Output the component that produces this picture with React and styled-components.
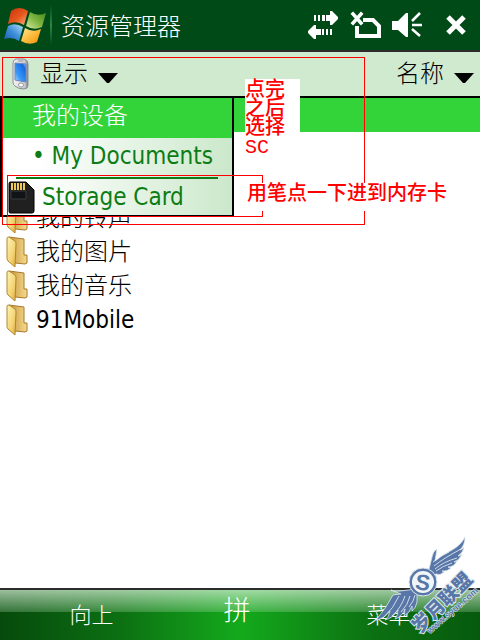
import { useState } from 'react';
import styled, { createGlobalStyle } from 'styled-components';

const files = ['我的铃声', '我的图片', '我的音乐', '91Mobile'];

const WindowsLogo = () => (
  <svg width="48" height="50" viewBox="0 0 48 50" aria-hidden="true">
    <defs>
      <linearGradient id="red" x1="0" y1="0" x2="1" y2="1">
        <stop offset="0" stopColor="#c4330c" />
        <stop offset="0.55" stopColor="#e8571c" />
        <stop offset="1" stopColor="#fbb48a" />
      </linearGradient>
      <linearGradient id="green" x1="1" y1="0" x2="0" y2="1">
        <stop offset="0" stopColor="#3f8a1e" />
        <stop offset="0.5" stopColor="#7fb540" />
        <stop offset="1" stopColor="#d4e8a0" />
      </linearGradient>
      <linearGradient id="blue" x1="0" y1="1" x2="1" y2="0">
        <stop offset="0" stopColor="#1859b4" />
        <stop offset="0.5" stopColor="#3f8fd8" />
        <stop offset="1" stopColor="#b4e0f6" />
      </linearGradient>
      <linearGradient id="yellow" x1="1" y1="1" x2="0" y2="0">
        <stop offset="0" stopColor="#f08c10" />
        <stop offset="0.5" stopColor="#fcbc3c" />
        <stop offset="1" stopColor="#fdeaa0" />
      </linearGradient>
    </defs>
    <path d="M11 11 Q19 5 28 11 L24 25 Q16 20 8 24 Z" fill="url(#red)" />
    <path d="M30 12 Q38 17 46 13 L42 27 Q34 31 26 26 Z" fill="url(#green)" />
    <path d="M8 26 Q15 22 23 27 L19 41 Q12 36 4 39 Z" fill="url(#blue)" />
    <path d="M25 28 Q33 33 41 29 L37 42 Q29 46 21 41 Z" fill="url(#yellow)" />
  </svg>
);

const SyncIcon = () => (
  <svg width="32" height="28" viewBox="0 0 32 28" fill="#fff" aria-hidden="true">
    <path d="M7 4h2v6H7zM11 4h2v6h-2zM15 4h3v6h-3zM19 4h4V0h2l6 6v2l-6 6h-2v-4h-4z" />
    <path d="M25 18h-2v6h2zM21 18h-2v6h2zM17 18h-2v6h2zM14 18H9v-4H7l-6 6v2l6 6h2v-4h5z" />
  </svg>
);

const NoCardIcon = () => (
  <svg width="32" height="28" viewBox="0 0 32 28" fill="none" stroke="#fff" aria-hidden="true">
    <path d="M4 3l8 9M12 3l-8 9" strokeWidth="3.500" strokeLinecap="square" />
    <path d="M14 9h10l6 6v10H8V15" strokeWidth="4" />
  </svg>
);

const SpeakerIcon = () => (
  <svg width="32" height="28" viewBox="0 0 32 28" aria-hidden="true">
    <path d="M1 10h6l8-8h2v24h-2l-8-7H1z" fill="#fff" />
    <path d="M21 10l8-8M21 14h10M21 18l8 7" stroke="#fff" strokeWidth="2.500" fill="none" />
  </svg>
);

const CloseIcon = () => (
  <svg width="20" height="20" viewBox="0 0 20 20" aria-hidden="true">
    <path d="M2 2l16 16M18 2L2 18" stroke="#fff" strokeWidth="5" />
  </svg>
);

const PhoneIcon = () => (
  <svg width="18" height="32" viewBox="0 0 18 32" aria-hidden="true">
    <defs>
      <linearGradient id="body" x1="0" x2="1">
        <stop offset="0" stopColor="#f4f4f8" />
        <stop offset="0.8" stopColor="#c8c8d0" />
        <stop offset="1" stopColor="#77777f" />
      </linearGradient>
      <linearGradient id="screen" x1="0" y1="1" x2="1" y2="0">
        <stop offset="0" stopColor="#b8e0ff" />
        <stop offset="0.3" stopColor="#3c9cf8" />
        <stop offset="0.8" stopColor="#1468e0" />
        <stop offset="1" stopColor="#a8d0ff" />
      </linearGradient>
    </defs>
    <path
      d="M4 1h8q4 1 4 5v21q0 4-4 4-6 0-9-3-2-1-2-4V5q0-3 3-4z"
      fill="url(#body)"
      stroke="#8c8c94"
    />
    <path d="M3 5l11 1v18L3 22z" fill="url(#screen)" stroke="#6a84b8" />
    <path d="M6 3h5" stroke="#999" />
    <ellipse cx="9" cy="27" rx="2.500" ry="2" fill="#fff" stroke="#999" />
  </svg>
);

const CaretIcon = () => (
  <svg width="20" height="10" viewBox="0 0 20 10" aria-hidden="true">
    <path d="M0 0h20l-9 10H9z" fill="#000" />
  </svg>
);

const CardIcon = () => (
  <svg width="27" height="33" viewBox="0 0 27 33" aria-hidden="true">
    <path d="M2 1h16l8 8v21q0 2-2 2H2q-1 0-1-2V3q0-2 1-2z" fill="#202020" stroke="#000" />
    <path d="M3 10h15v8H3z" fill="#101418" stroke="#3a3a3a" />
    <path d="M4 2v7M7 2v7M10 2v7M13 2v7M16 2v7" stroke="#f0c858" strokeWidth="2" />
  </svg>
);

const FolderIcon = () => (
  <svg width="22" height="34" viewBox="0 0 22 34" aria-hidden="true">
    <defs>
      <linearGradient id="flap" x1="0" y1="0" x2="1" y2="1">
        <stop offset="0" stopColor="#fdf4b8" />
        <stop offset="0.6" stopColor="#f4d474" />
        <stop offset="1" stopColor="#dca63c" />
      </linearGradient>
      <linearGradient id="back" x1="0" x2="1">
        <stop offset="0" stopColor="#c8943c" />
        <stop offset="1" stopColor="#f4dc8c" />
      </linearGradient>
    </defs>
    <path d="M3 3l15 2v16h3v8l-2 1-10-1z" fill="url(#back)" stroke="#a8782c" />
    <path d="M1 4q0-1 2-1l6 4q1 1 1 3l-1 23-7-6q-1-1-1-3z" fill="url(#flap)" stroke="#b08830" />
  </svg>
);

const Watermark = () => (
  <svg width="110" height="110" viewBox="370 530 110 110" role="img" aria-label="岁月联盟">
    <g fill="#5877a8" stroke="#dbe7ec" strokeWidth="0.800">
      <path d="M428 573l4-16q1-6 5-8l-2 12q8-7 17-11 9-5 13-13 0 8-5 13 3-1 4-3-1 6-6 9 2 0 4-2-3 7-8 8l3-1q-3 6-9 6l3 1q-4 4-9 3l2 1q-4 4-8 2-3 1-5 4z" />
      <path
        d="M434 566q10-8 27-17M435 569q8-7 22-11M436 571q7-5 16-8M433 562q7-6 16-10"
        fill="none"
        stroke="#eef3f6"
      />
      <path d="M417 595l-1-6-16 2q-6 1-9-1l10 4-8 1q-6 12-17 25 8-1 14-9-1 6-5 9 8-2 13-10 0 5-3 9 7-2 10-10l-1 7q6-3 8-10v5q4-3 5-9z" />
      <path
        d="M399 596q-5 12-16 22M405 596q-4 12-13 20M410 596q-2 9-9 16M415 595q-1 6-6 12"
        fill="none"
        stroke="#eef3f6"
      />
    </g>
    <circle cx="423" cy="582" r="14" fill="#5877a8" stroke="#dbe7ec" />
    <circle cx="423" cy="582" r="11" fill="#f0f5f8" />
    <SealText x="423" y="590" textAnchor="middle" transform="rotate(8 423 582)">S</SealText>
    <BrandText x="420" y="634" transform="rotate(-45 420 634)">岁月联盟</BrandText>
    <UrlText x="430" y="634" transform="rotate(-41 430 634)">www.syue.com</UrlText>
  </svg>
);

const App = () => {
  const [menuOpen, setMenuOpen] = useState(true);

  return (
    <Screen>
      <GlobalStyle />
      <TitleBar>
        <WindowsLogo />
        <Divider />
        <Title>资源管理器</Title>
        <Status>
          <SyncIcon />
          <NoCardIcon />
          <SpeakerIcon />
        </Status>
        <CloseButton type="button" aria-label="关闭">
          <CloseIcon />
        </CloseButton>
      </TitleBar>

      <Toolbar>
        <ToolButton type="button" aria-expanded={menuOpen} onClick={() => setMenuOpen(!menuOpen)}>
          <PhoneIcon />
          <span>显示</span>
          <CaretIcon />
        </ToolButton>
        <ToolButton type="button">
          <span>名称</span>
          <CaretIcon />
        </ToolButton>
      </Toolbar>

      <Content>
        <FileList>
          <FileRow $selected />
          <FileRow />
          <FileRow />
          {files.map((name) => (
            <FileRow key={name}>
              <FolderIcon />
              <FileName>{name}</FileName>
            </FileRow>
          ))}
        </FileList>
        {menuOpen && (
          <Menu>
            <MenuItem type="button" $active>我的设备</MenuItem>
            <MenuItem type="button">• My Documents</MenuItem>
            <Separator />
            <CardItem type="button">
              <CardIcon />
              <span>Storage Card</span>
            </CardItem>
          </Menu>
        )}
      </Content>

      <Footer>
        <SoftKey type="button">向上</SoftKey>
        <InputKey type="button">拼</InputKey>
        <SoftKey type="button">菜单</SoftKey>
      </Footer>

      {/* Tutorial marks drawn over the screen */}
      <OuterFrame />
      <InnerFrame />
      <StepNote>点完之后选择SC</StepNote>
      <CardNote>用笔点一下进到内存卡</CardNote>
      <Stamp>
        <Watermark />
      </Stamp>
    </Screen>
  );
};

// Styled Components
const GlobalStyle = createGlobalStyle`
  * {
    box-sizing: border-box;
  }

  body {
    margin: 0;
    background: #fff;
  }

  svg {
    display: block;
    flex: none;
  }

  button {
    margin: 0;
    padding: 0;
    border: 0;
    background: none;
    color: inherit;
    font: inherit;
    cursor: pointer;
  }
`;

const Screen = styled.div`
  position: relative;
  display: flex;
  flex-direction: column;
  min-height: 100vh;
  overflow: hidden;
  color: #000;
  font-family: 'DejaVu Sans Condensed', 'Noto Sans CJK SC', sans-serif;
  font-size: 24px;
  font-weight: 300;
  line-height: 34px;
`;

const TitleBar = styled.header`
  display: flex;
  align-items: center;
  height: 52px;
  padding-right: 14px;
  border-bottom: 2px solid #2c2c2c;
  background: #004a18;
  color: #fff;
`;

const Divider = styled.span`
  width: 2px;
  height: 40px;
  margin: 0 9px 0 2px;
  background: linear-gradient(#004a18, #2a8a44, #004a18);
`;

const Title = styled.h1`
  flex: 1;
  margin: 0;
  padding-top: 4px;
  font-size: 24px;
  font-weight: 300;
  line-height: 34px;
`;

const Status = styled.div`
  display: flex;
  gap: 10px;
  margin-right: 23px;
`;

const CloseButton = styled.button`
  display: flex;
`;

const Toolbar = styled.div`
  display: flex;
  justify-content: space-between;
  height: 46px;
  padding: 0 6px 0 12px;
  border-bottom: 2px solid #000;
  background: #cfeacf;
`;

const ToolButton = styled.button`
  display: flex;
  align-items: center;
  gap: 10px;

  svg:last-child {
    margin-top: 8px;
  }
`;

const Content = styled.main`
  position: relative;
  flex: 1;
`;

const FileList = styled.ul`
  margin: 0;
  padding: 0;
  list-style: none;
`;

const FileRow = styled.li`
  display: flex;
  align-items: center;
  gap: 8px;
  height: 34px;
  padding-left: 6px;
  background: ${props => props.$selected ? '#33d43a' : '#fff'};
`;

const FileName = styled.span`
  padding-top: 2px;
`;

const Menu = styled.div`
  position: absolute;
  top: -2px;
  left: 0;
  display: flex;
  flex-direction: column;
  width: 234px;
  border: 2px solid #000;
  background: linear-gradient(90deg, #fff 15%, #cbe8cb);
  color: #0c7c14;
`;

const MenuItem = styled.button`
  height: ${props => props.$active ? '40px' : '39px'};
  padding: 0 0 4px 30px;
  background: ${props => props.$active ? '#33d43a' : 'none'};
  color: ${props => props.$active ? '#fff' : '#0c7c14'};
  text-align: left;
`;

const Separator = styled.hr`
  width: 202px;
  height: 2px;
  margin: 0 14px;
  border: 0;
  background: #0c7c14;
`;

const CardItem = styled.button`
  display: flex;
  align-items: center;
  gap: 7px;
  height: 36px;
  padding-left: 6px;
`;

const Footer = styled.footer`
  display: grid;
  grid-template-columns: 1fr 114px 1fr;
  align-items: center;
  height: 52px;
  border-top: 2px solid #2c2c2c;
  background:
    linear-gradient(rgba(220, 240, 220, 0.7), rgba(190, 230, 190, 0.25)) top / 100% 22px no-repeat,
    linear-gradient(90deg, #064a0c, #0c7012 25%, #14aa1c 50%, #0c7012 78%, #065a0e);
  color: #fff;
`;

const SoftKey = styled.button`
  padding-top: 2px;
  font-size: 22px;
`;

const InputKey = styled.button`
  padding: 0 6px 8px 0;
  font-size: 27px;
`;

const Frame = styled.div`
  position: absolute;
  border: 1px solid #f00;
  pointer-events: none;
`;

const OuterFrame = styled(Frame)`
  top: 57px;
  left: 2px;
  width: 363px;
  height: 168px;
`;

const InnerFrame = styled(Frame)`
  top: 175px;
  left: 7px;
  width: 256px;
  height: 42px;
`;

const Note = styled.p`
  position: absolute;
  margin: 0;
  background: #fff;
  color: #f00;
  font-family: 'Liberation Mono', 'Noto Sans CJK SC', monospace;
  font-size: 20px;
  font-weight: 500;
`;

const StepNote = styled(Note)`
  top: 79px;
  left: 245px;
  width: 55px;
  padding-top: 2px;
  line-height: 19px;
`;

const CardNote = styled(Note)`
  top: 183px;
  left: 247px;
  padding: 2px 0 6px;
  line-height: 20px;
`;

const Stamp = styled.div`
  position: absolute;
  right: 0;
  bottom: 0;
  pointer-events: none;
`;

const SealText = styled.text`
  fill: #5877a8;
  font-family: 'Liberation Sans', sans-serif;
  font-size: 22px;
  font-weight: 700;
`;

const BrandText = styled.text`
  fill: #5877a8;
  stroke: #dbe7ec;
  stroke-width: 2px;
  paint-order: stroke;
  font-family: 'Noto Sans CJK SC', sans-serif;
  font-size: 19px;
  font-weight: 900;
`;

const UrlText = styled.text`
  fill: #5877a8;
  stroke: #dbe7ec;
  stroke-width: 1px;
  paint-order: stroke;
  font-family: 'Liberation Sans', sans-serif;
  font-size: 9px;
  font-weight: 700;
`;

export default App;
